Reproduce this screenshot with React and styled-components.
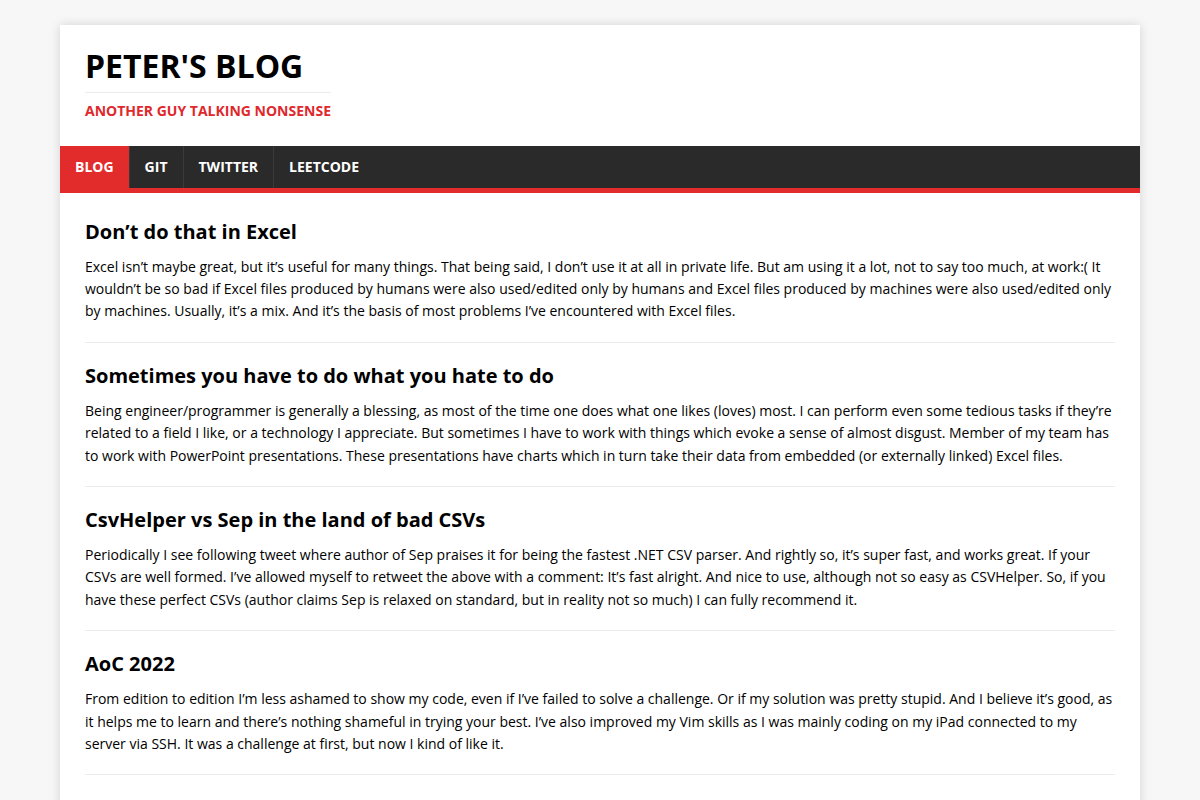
import React from 'react'
import styled, { createGlobalStyle } from 'styled-components'

const GlobalStyle = createGlobalStyle`
  * { box-sizing: border-box; }
  body {
    margin: 0;
    background: #f7f7f7;
    font-family: "Open Sans", "Liberation Sans", sans-serif;
    color: #000;
  }
`

const posts = [
  {
    title: 'Don’t do that in Excel',
    text: 'Excel isn’t maybe great, but it’s useful for many things. That being said, I don’t use it at all in private life. But am using it a lot, not to say too much, at work:( It wouldn’t be so bad if Excel files produced by humans were also used/edited only by humans and Excel files produced by machines were also used/edited only by machines. Usually, it’s a mix. And it’s the basis of most problems I’ve encountered with Excel files.',
  },
  {
    title: 'Sometimes you have to do what you hate to do',
    text: 'Being engineer/programmer is generally a blessing, as most of the time one does what one likes (loves) most. I can perform even some tedious tasks if they’re related to a field I like, or a technology I appreciate. But sometimes I have to work with things which evoke a sense of almost disgust. Member of my team has to work with PowerPoint presentations. These presentations have charts which in turn take their data from embedded (or externally linked) Excel files.',
  },
  {
    title: 'CsvHelper vs Sep in the land of bad CSVs',
    text: 'Periodically I see following tweet where author of Sep praises it for being the fastest .NET CSV parser. And rightly so, it’s super fast, and works great. If your CSVs are well formed. I’ve allowed myself to retweet the above with a comment: It’s fast alright. And nice to use, although not so easy as CSVHelper. So, if you have these perfect CSVs (author claims Sep is relaxed on standard, but in reality not so much) I can fully recommend it.',
  },
  {
    title: 'AoC 2022',
    text: 'From edition to edition I’m less ashamed to show my code, even if I’ve failed to solve a challenge. Or if my solution was pretty stupid. And I believe it’s good, as it helps me to learn and there’s nothing shameful in trying your best. I’ve also improved my Vim skills as I was mainly coding on my iPad connected to my server via SSH. It was a challenge at first, but now I kind of like it.',
  },
]

const navItems = ['Blog', 'Git', 'Twitter', 'Leetcode']

const App = () => {
  return (
    <>
      <GlobalStyle />
      <Page>
        <Container>
          <Header>
            <Branding>
              <SiteTitle>Peter's Blog</SiteTitle>
              <Tagline>Another guy talking nonsense</Tagline>
            </Branding>
          </Header>
          <Nav>
            {navItems.map((item, i) => (
              <NavItem key={item} $active={i === 0}>{item}</NavItem>
            ))}
          </Nav>
          <Content>
            {posts.map((p) => (
              <Post key={p.title}>
                <PostTitle>{p.title}</PostTitle>
                <PostText>{p.text}</PostText>
              </Post>
            ))}
          </Content>
        </Container>
      </Page>
    </>
  )
}

const Page = styled.div`
  padding-top: 25px;
  display: flex;
  justify-content: center;
`

const Container = styled.div`
  width: 1080px;
  background: #fff;
  box-shadow: 0 0 10px rgba(0, 0, 0, 0.15);
  min-height: 800px;
`

const Header = styled.header`
  padding: 20px 25px 25px;
`

const Branding = styled.div`
  display: inline-block;
`

const SiteTitle = styled.h1`
  margin: 0;
  font-size: 32px;
  line-height: 1.3;
  font-weight: 700;
  text-transform: uppercase;
  padding-bottom: 5px;
  border-bottom: 1px solid #ebebeb;
`

const Tagline = styled.div`
  font-size: 14px;
  font-weight: 700;
  color: #e0282c;
  text-transform: uppercase;
  line-height: 1.4;
  padding-top: 8px;
`

const Nav = styled.nav`
  display: flex;
  background: #2a2a2a;
  border-bottom: 5px solid #e22b2b;
  height: 47px;
`

const NavItem = styled.a`
  display: flex;
  align-items: center;
  padding: 0 15px;
  font-size: 14px;
  font-weight: 700;
  color: #fff;
  text-transform: uppercase;
  background: ${(p) => (p.$active ? '#e22b2b' : 'transparent')};
  border-right: 1px solid #3a3a3a;
  cursor: pointer;

  &:last-child {
    border-right: none;
  }
`

const Content = styled.main`
  padding: 26px 25px 0;
`

const Post = styled.article`
  padding-bottom: 19px;
  margin-bottom: 20px;
  border-bottom: 1px solid #ebebeb;
`

const PostTitle = styled.h2`
  margin: 0 0 11px;
  font-size: 20px;
  line-height: 1.3;
  font-weight: 700;
`

const PostText = styled.p`
  margin: 0;
  font-size: 14px;
  line-height: 1.6;
  color: #000;
`

export default App
